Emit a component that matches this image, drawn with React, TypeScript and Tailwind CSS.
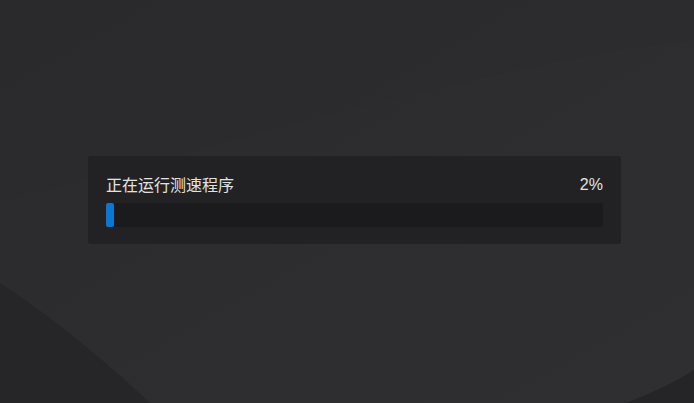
import React from 'react';

const progress = 2;

function Backdrop() {
  return (
    <svg className="absolute inset-0 h-full w-full" viewBox="0 0 694 403" preserveAspectRatio="none">
      <defs>
        <linearGradient id="bg" x1="0" y1="0" x2="1" y2="1">
          <stop offset="0" stopColor="#2a2a2c" />
          <stop offset="0.5" stopColor="#2d2d30" />
          <stop offset="1" stopColor="#2f2f32" />
        </linearGradient>
      </defs>
      <rect width="694" height="403" fill="url(#bg)" />
      <path d="M0 0 L694 0 L694 40 C500 60 250 140 0 200 Z" fill="#2b2b2d" opacity="0.6" />
      <path d="M0 283 C50 315 110 365 150 403 L0 403 Z" fill="#262628" />
      <path d="M694 370 C670 385 645 396 625 403 L694 403 Z" fill="#252527" />
    </svg>
  );
}

export default function App() {
  return (
    <div className="relative h-[403px] w-[694px] overflow-hidden bg-[#2c2c2e] font-['Noto_Sans_CJK_SC','Noto_Sans',sans-serif]">
      <Backdrop />
      <div className="relative pl-[88px] pt-[156px]">
        <div className="w-[533px] rounded-[3px] bg-[#222224] px-[18px] pb-[17px] pt-[18px]">
          <div className="flex h-[21px] items-center justify-between text-[16px] leading-[21px] text-[#e2e2e2]">
            <span>正在运行测速程序</span>
            <span className="font-['Liberation_Sans',sans-serif]">{progress}%</span>
          </div>
          <div className="mt-2 h-6 w-full rounded-[2px] bg-[#1b1b1d]">
            <div className="h-full rounded-[2px] bg-[#0a78d2]" style={{ width: `${progress * 0.8}%` }} />
          </div>
        </div>
      </div>
    </div>
  );
}
